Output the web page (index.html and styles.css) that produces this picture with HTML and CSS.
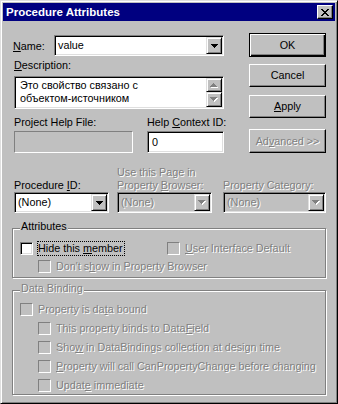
FILE: index.html
```html
<!DOCTYPE html>
<html lang="en">

<head>
        <meta charset="UTF-8">
        <meta name="viewport" content="width=device-width, initial-scale=1.0">
        <title>Procedure Attributes</title>
        <link rel="stylesheet" href="styles.css">
</head>

<body>
        <div class="window">
                <div class="titlebar">
                        <span class="title">Procedure Attributes</span>
                        <span class="close-btn">
                                <svg width="8" height="7" viewBox="0 0 8 7" shape-rendering="crispEdges">
                                        <path d="M0 0h2v1H0z M6 0h2v1H6z M1 1h2v1H1z M5 1h2v1H5z M2 2h4v1H2z M3 3h2v1H3z M2 4h4v1H2z M1 5h2v1H1z M5 5h2v1H5z M0 6h2v1H0z M6 6h2v1H6z" fill="#000" />
                                </svg>
                        </span>
                </div>

                <div class="content">
                        <div class="top">
                                <div class="left-col">
                                        <div class="name-row">
                                                <span class="name-label"><u>N</u>ame:</span>
                                                <div class="combo name-combo">
                                                        <span class="combo-text">value</span>
                                                        <span class="drop-btn">
                                                                <svg width="7" height="4" viewBox="0 0 7 4" shape-rendering="crispEdges">
                                                                        <path d="M0 0h7v1H0z M1 1h5v1H1z M2 2h3v1H2z M3 3h1v1H3z" fill="#000" />
                                                                </svg>
                                                        </span>
                                                </div>
                                        </div>

                                        <div class="label desc-label"><u>D</u>escription:</div>
                                        <div class="textarea">
                                                <div class="textarea-text">Это свойство связано с<br>объектом-источником</div>
                                                <div class="scrollbar">
                                                        <span class="scroll-btn scroll-up">
                                                                <svg width="8" height="5" viewBox="0 0 8 5" shape-rendering="crispEdges">
                                                                        <path d="M4 1h1v1H4z M3 2h3v1H3z M2 3h5v1H2z M1 4h7v1H1z" fill="#fff" />
                                                                        <path d="M3 0h1v1H3z M2 1h3v1H2z M1 2h5v1H1z M0 3h7v1H0z" fill="#808080" />
                                                                </svg>
                                                        </span>
                                                        <span class="scroll-btn scroll-down">
                                                                <svg width="8" height="5" viewBox="0 0 8 5" shape-rendering="crispEdges">
                                                                        <path d="M1 1h7v1H1z M2 2h5v1H2z M3 3h3v1H3z M4 4h1v1H4z" fill="#fff" />
                                                                        <path d="M0 0h7v1H0z M1 1h5v1H1z M2 2h3v1H2z M3 3h1v1H3z" fill="#808080" />
                                                                </svg>
                                                        </span>
                                                </div>
                                        </div>

                                        <div class="help-row">
                                                <div class="help-file">
                                                        <div class="label">Project Help File:</div>
                                                        <div class="edit edit-disabled"></div>
                                                </div>
                                                <div class="help-id">
                                                        <div class="label">Help <u>C</u>ontext ID:</div>
                                                        <div class="edit">0</div>
                                                </div>
                                        </div>
                                </div>

                                <div class="buttons">
                                        <div class="btn btn-default">OK</div>
                                        <div class="btn btn-cancel">Cancel</div>
                                        <div class="btn btn-apply"><span><u>A</u>pply</span></div>
                                        <div class="btn btn-advanced disabled"><span>Ad<u>v</u>anced &gt;&gt;</span></div>
                                </div>
                        </div>

                        <div class="combos-row">
                                <div class="field field-proc">
                                        <div class="label">Procedure <u>I</u>D:</div>
                                        <div class="combo">
                                                <span class="combo-text">(None)</span>
                                                <span class="drop-btn">
                                                        <svg width="7" height="4" viewBox="0 0 7 4" shape-rendering="crispEdges">
                                                                <path d="M0 0h7v1H0z M1 1h5v1H1z M2 2h3v1H2z M3 3h1v1H3z" fill="#000" />
                                                        </svg>
                                                </span>
                                        </div>
                                </div>
                                <div class="field field-page">
                                        <div class="label disabled">Use this Page in<br>Property <u>B</u>rowser:</div>
                                        <div class="combo combo-disabled">
                                                <span class="combo-text disabled">(None)</span>
                                                <span class="drop-btn">
                                                        <svg width="8" height="5" viewBox="0 0 8 5" shape-rendering="crispEdges">
                                                                <path d="M1 1h7v1H1z M2 2h5v1H2z M3 3h3v1H3z M4 4h1v1H4z" fill="#fff" />
                                                                <path d="M0 0h7v1H0z M1 1h5v1H1z M2 2h3v1H2z M3 3h1v1H3z" fill="#808080" />
                                                        </svg>
                                                </span>
                                        </div>
                                </div>
                                <div class="field field-cat">
                                        <div class="label disabled">Property Category:</div>
                                        <div class="combo combo-disabled">
                                                <span class="combo-text disabled">(None)</span>
                                                <span class="drop-btn">
                                                        <svg width="8" height="5" viewBox="0 0 8 5" shape-rendering="crispEdges">
                                                                <path d="M1 1h7v1H1z M2 2h5v1H2z M3 3h3v1H3z M4 4h1v1H4z" fill="#fff" />
                                                                <path d="M0 0h7v1H0z M1 1h5v1H1z M2 2h3v1H2z M3 3h1v1H3z" fill="#808080" />
                                                        </svg>
                                                </span>
                                        </div>
                                </div>
                        </div>

                        <fieldset class="group group-attr">
                                <legend>Attributes</legend>
                                <div class="check-row">
                                        <div class="check check-wide">
                                                <span class="box"></span>
                                                <span class="check-text focus">Hide this <u>m</u>ember</span>
                                        </div>
                                        <div class="check">
                                                <span class="box box-disabled"></span>
                                                <span class="check-text disabled"><u>U</u>ser Interface Default</span>
                                        </div>
                                </div>
                                <div class="check sub">
                                        <span class="box box-disabled"></span>
                                        <span class="check-text disabled">Don't s<u>h</u>ow in Property Browser</span>
                                </div>
                        </fieldset>

                        <fieldset class="group group-data">
                                <legend class="disabled">Data Binding</legend>
                                <div class="check">
                                        <span class="box box-disabled"></span>
                                        <span class="check-text disabled">Property is da<u>t</u>a bound</span>
                                </div>
                                <div class="check sub">
                                        <span class="box box-disabled"></span>
                                        <span class="check-text disabled">This property binds to Data<u>F</u>ield</span>
                                </div>
                                <div class="check sub">
                                        <span class="box box-disabled"></span>
                                        <span class="check-text disabled">Sho<u>w</u> in DataBindings collection at design time</span>
                                </div>
                                <div class="check sub">
                                        <span class="box box-disabled"></span>
                                        <span class="check-text disabled"><u>P</u>roperty will call CanPropertyChange before changing</span>
                                </div>
                                <div class="check sub">
                                        <span class="box box-disabled"></span>
                                        <span class="check-text disabled">Updat<u>e</u> immediate</span>
                                </div>
                        </fieldset>
                </div>
        </div>
</body>

</html>
```

FILE: styles.css
```css
html,
body {
        margin: 0;
        padding: 0;
        overflow: hidden;
}

body {
        font-family: "Liberation Sans", Arial, sans-serif;
        font-size: 10.8px;
        color: #000;
        background-color: #c0c0c0;
}

.window {
        width: 338px;
        height: 404px;
        box-sizing: border-box;
        background-color: #c0c0c0;
        border: 1px solid;
        border-color: #dfdfdf #000 #000 #dfdfdf;
        box-shadow: inset 1px 1px #fff, inset -1px -1px #808080;
        padding: 2px;
}

/* title bar */
.titlebar {
        height: 18px;
        background-color: #000080;
        display: flex;
        align-items: center;
        justify-content: space-between;
        padding: 0 2px 0 3px;
}

.title {
        color: #fff;
        font-weight: bold;
        font-size: 11.5px;
}

.close-btn {
        width: 16px;
        height: 14px;
        box-sizing: border-box;
        background-color: #c0c0c0;
        border: 1px solid;
        border-color: #fff #000 #000 #fff;
        box-shadow: inset -1px -1px #808080;
        display: flex;
        align-items: center;
        justify-content: center;
}

.close-btn svg {
        display: block;
}

.content {
        padding: 12px 9px 0 9px;
}

.label {
        line-height: 13px;
        white-space: nowrap;
}

.disabled {
        color: #808080;
        text-shadow: 1px 1px 0 #fff;
}

/* top part */
.top {
        display: flex;
        justify-content: space-between;
}

.left-col {
        width: 210px;
        margin-left: 2px;
}

.name-row {
        display: flex;
        align-items: center;
        margin-top: 2px;
}

.name-label {
        flex: 1;
        margin-left: -1px;
}

.combo {
        height: 21px;
        box-sizing: border-box;
        display: flex;
        border: 1px solid;
        border-color: #808080 #fff #fff #808080;
        box-shadow: inset 1px 1px #000, inset -1px -1px #dfdfdf;
        padding: 1px;
        background-color: #fff;
}

.name-combo {
        width: 170px;
}

.combo-disabled {
        background-color: #c0c0c0;
}

.combo-text {
        flex: 1;
        padding-left: 2px;
        line-height: 17px;
        white-space: nowrap;
        overflow: hidden;
}

.drop-btn,
.scroll-btn {
        width: 16px;
        box-sizing: border-box;
        background-color: #c0c0c0;
        border: 1px solid;
        border-color: #dfdfdf #000 #000 #dfdfdf;
        box-shadow: inset 1px 1px #fff, inset -1px -1px #808080;
        display: flex;
        align-items: center;
        justify-content: center;
}

.drop-btn svg,
.scroll-btn svg {
        display: block;
}

.desc-label {
        margin-top: 3px;
        margin-bottom: 4px;
}

.textarea {
        height: 33px;
        box-sizing: border-box;
        display: flex;
        border: 1px solid;
        border-color: #808080 #fff #fff #808080;
        box-shadow: inset 1px 1px #000, inset -1px -1px #dfdfdf;
        padding: 1px;
        background-color: #fff;
}

.textarea-text {
        flex: 1;
        padding: 1px 0 0 4px;
        line-height: 13px;
        white-space: nowrap;
}

.scrollbar {
        width: 16px;
        display: flex;
        flex-direction: column;
}

.scroll-up {
        height: 14px;
}

.scroll-down {
        flex: 1;
}

.help-row {
        display: flex;
        justify-content: space-between;
        margin-top: 7px;
}

.help-row .label {
        margin-bottom: 2px;
}

.help-file {
        width: 119px;
}

.help-id {
        width: 77px;
}

.edit {
        height: 22px;
        box-sizing: border-box;
        border: 1px solid;
        border-color: #808080 #fff #fff #808080;
        box-shadow: inset 1px 1px #000, inset -1px -1px #dfdfdf;
        padding: 1px 1px 1px 4px;
        line-height: 18px;
        background-color: #fff;
}

.edit-disabled {
        background-color: #c0c0c0;
        box-shadow: none;
}

/* buttons */
.buttons {
        width: 77px;
        display: flex;
        flex-direction: column;
}

.btn {
        height: 23px;
        box-sizing: border-box;
        border: 1px solid;
        border-color: #fff #000 #000 #fff;
        box-shadow: inset -1px -1px #808080;
        display: flex;
        align-items: center;
        justify-content: center;
        line-height: 13px;
}

.btn-default {
        height: 24px;
        border-color: #000;
        box-shadow: inset 1px 1px #fff, inset -1px -1px #000, inset -2px -2px #808080;
}

.btn-cancel {
        margin-top: 7px;
}

.btn-apply {
        margin-top: 8px;
}

.btn-advanced {
        height: 24px;
        margin-top: 11px;
}

/* procedure id row */
.combos-row {
        display: flex;
        align-items: flex-end;
        margin: 13px 0 0 2px;
}

.field-proc {
        width: 95px;
}

.field-page {
        width: 95px;
        margin-left: 8px;
}

.field-cat {
        width: 103px;
        margin-left: 11px;
}

/* group boxes */
.group {
        margin: 7px 0 0 0;
        padding: 4px 0 3px 7px;
        min-width: 0;
        border: 1px solid #808080;
        box-shadow: inset 1px 1px #fff, 1px 1px #fff;
}

.group legend {
        padding: 0 1px 4px 1px;
        line-height: 13px;
        background-color: #c0c0c0;
}

.group-data {
        margin-top: 4px;
        padding-top: 3px;
        padding-bottom: 1px;
}

.check-row {
        display: flex;
}

.check {
        display: flex;
        align-items: center;
        height: 15px;
}

.check-wide {
        width: 147px;
}

.sub {
        margin-left: 18px;
        margin-top: 3px;
}

.group-data .check + .check {
        margin-top: 4px;
}

.box {
        width: 13px;
        height: 13px;
        box-sizing: border-box;
        border: 1px solid;
        border-color: #808080 #fff #fff #808080;
        box-shadow: inset 1px 1px #000, inset -1px -1px #dfdfdf;
        background-color: #fff;
        margin-right: 4px;
}

.box-disabled {
        background-color: #c0c0c0;
        box-shadow: none;
}

.check-text {
        line-height: 13px;
        border: 1px dotted transparent;
        padding-right: 1px;
        white-space: nowrap;
}

.check-text.focus {
        border-color: #000;
}
```
